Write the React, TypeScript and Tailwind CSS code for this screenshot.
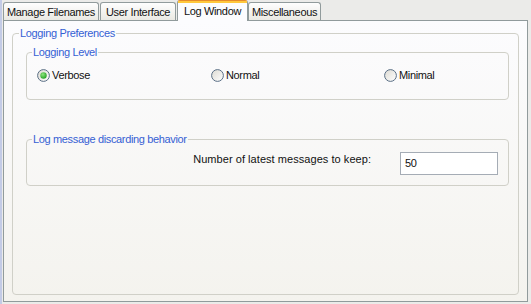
function Radio({ checked }: { checked?: boolean }) {
  return (
    <svg width="13" height="13" viewBox="0 0 13 13" className="shrink-0">
      <defs>
        <linearGradient id="rb" x1="0" y1="0" x2="1" y2="1">
          <stop offset="0" stopColor="#dcdad2" />
          <stop offset="1" stopColor="#ffffff" />
        </linearGradient>
        <radialGradient id="rdot" cx="0.4" cy="0.35" r="0.7">
          <stop offset="0" stopColor="#8ee57f" />
          <stop offset="1" stopColor="#1f9f1f" />
        </radialGradient>
      </defs>
      <circle cx="6.5" cy="6.5" r="5.9" fill="url(#rb)" stroke="#5a6f86" strokeWidth="1" />
      {checked && <circle cx="6.5" cy="6.5" r="3.2" fill="url(#rdot)" />}
    </svg>
  );
}

function Tab({ label, width, selected, className = "" }: { label: string; width: string; selected?: boolean; className?: string }) {
  if (selected) {
    return (
      <div className={`relative z-10 -mb-px h-[21px] ${width} rounded-t-[3px] border-x border-t border-[#919b9c] border-t-[#e68b2c] bg-[#fcfcfe] ${className}`}>
        <div className="flex h-full items-start justify-center border-t-2 border-[#ffc83c] pt-[2px]">{label}</div>
      </div>
    );
  }
  return (
    <div className={`flex h-[18px] ${width} items-center justify-center rounded-t-[3px] border-x border-t border-[#919b9c] bg-gradient-to-b from-[#fefefe] to-[#eae9e3] pt-px ${className}`}>
      {label}
    </div>
  );
}

export default function App() {
  return (
    <div className="flex h-[304px] w-[531px] flex-col border-l-2 border-[#c3cbe6] bg-[#ebebe9] pb-[2px] pl-px pr-[3px] font-['Tahoma','Liberation_Sans',sans-serif] text-[11px] leading-[13px] tracking-[-0.35px] text-[#111]">
      {/* tab strip */}
      <div className="flex h-[20px] items-end">
        <Tab label="Manage Filenames" width="w-[96px]" />
        <Tab label="User Interface" width="w-[76px]" className="ml-px" />
        <Tab label="Log Window" width="w-[71px]" className="ml-px" selected />
        <Tab label="Miscellaneous" width="w-[73px]" />
      </div>

      {/* page */}
      <div className="flex flex-1 flex-col border border-[#919b9c] bg-gradient-to-b from-[#fcfcfe] to-[#f4f3ee]">
        <fieldset className="mx-[8px] mb-[6px] mt-[6px] flex-1 rounded-[4px] border border-[#d0d0c8]">
          <legend className="ml-[6px] px-px text-[#3560d4]">Logging Preferences</legend>
          <div className="pl-[13px] pr-[9px]">
            <fieldset className="mt-[6px] h-[54px] rounded-[4px] border border-[#d0d0c8]">
              <legend className="ml-[5px] px-px text-[#3560d4]">Logging Level</legend>
              <div className="flex pl-[10px] pt-[10px]">
                <label className="flex w-[174px] items-center">
                  <Radio checked />
                  <span className="ml-[2px]">Verbose</span>
                </label>
                <label className="flex w-[173px] items-center">
                  <Radio />
                  <span className="ml-[2px]">Normal</span>
                </label>
                <label className="flex items-center">
                  <Radio />
                  <span className="ml-[2px]">Minimal</span>
                </label>
              </div>
            </fieldset>

            <fieldset className="mt-[33px] h-[53px] rounded-[4px] border border-[#d0d0c8]">
              <legend className="ml-[5px] px-px text-[#3560d4]">Log message discarding behavior</legend>
              <div className="flex items-start justify-end pr-[10px] pt-[6px]">
                <span className="mr-[29px] pt-px tracking-[0.05px]">Number of latest messages to keep:</span>
                <div className="flex h-[23px] w-[98px] items-center border border-[#a5acb5] bg-white pl-[4px]">50</div>
              </div>
            </fieldset>
          </div>
        </fieldset>
      </div>
    </div>
  );
}
